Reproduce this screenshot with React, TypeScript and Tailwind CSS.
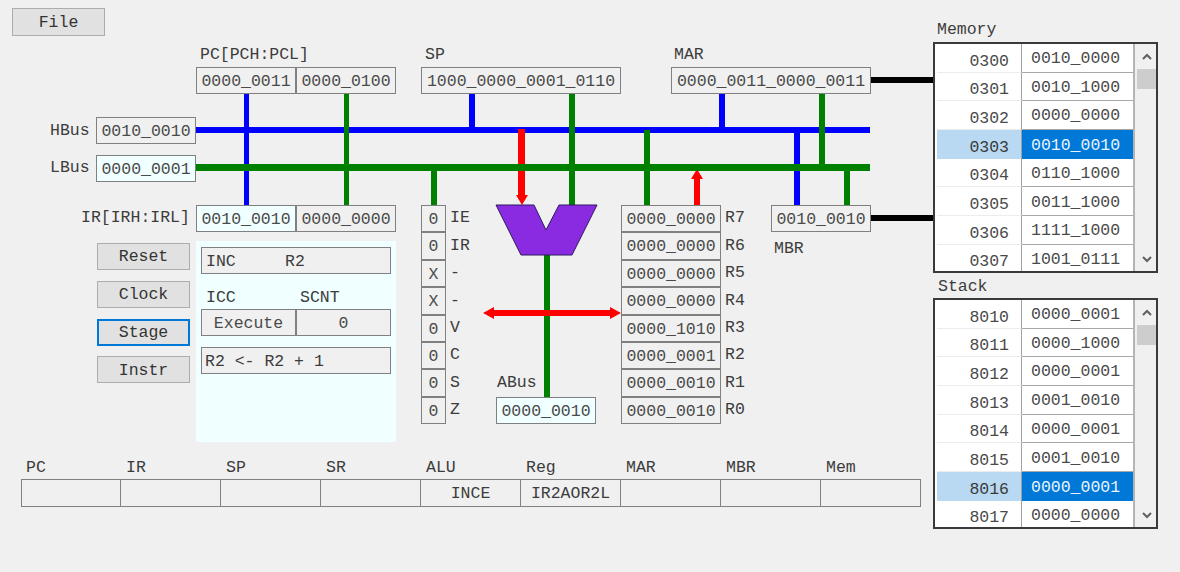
const box = "flex shrink-0 items-center justify-center border border-[#808080] pt-[3px] text-[#4a4a4a]";
const cell = `${box} h-[27px] w-[100px]`;
const wide = `${box} h-[27px] w-[200px]`;
const tint = `${cell} bg-[#f0ffff]`;
const text = "text-[#3c3c3c]";
const btn = "flex h-[27px] w-[93px] items-center justify-center border border-[#adadad] bg-[#e1e1e1] pt-[2px] text-[#333]";

function Wires() {
  return (
    <svg className="absolute left-0 top-0" width="933" height="460" viewBox="0 0 933 460">
      <g fill="#0000ff">
        <rect x="196" y="127" width="674" height="6" />
        <rect x="244" y="94" width="5" height="111" />
        <rect x="469" y="94" width="6" height="33" />
        <rect x="719" y="94" width="6" height="33" />
        <rect x="794" y="133" width="6" height="72" />
      </g>
      <g fill="#ff0000">
        <rect x="518" y="129" width="7" height="68" />
        <path d="M516 195 L528 195 L522 205 Z" />
        <rect x="694" y="178" width="6" height="27" />
        <path d="M697 169 L703 179 L691 179 Z" />
      </g>
      <g fill="#008000">
        <rect x="196" y="164" width="674" height="7" />
        <rect x="344" y="94" width="5" height="111" />
        <rect x="431" y="170" width="6" height="35" />
        <rect x="569" y="94" width="6" height="111" />
        <rect x="644" y="130" width="6" height="75" />
        <rect x="819" y="94" width="6" height="70" />
        <rect x="844" y="170" width="6" height="35" />
        <rect x="544" y="255" width="6" height="142" />
      </g>
      <g fill="#000000">
        <rect x="870" y="77" width="63" height="6" />
        <rect x="870" y="215" width="63" height="6" />
      </g>
      <path d="M496 205 L534 205 L546 230 L559 205 L597 205 L572 255 L521 255 Z" fill="#8a2be2" stroke="#2a1a60" strokeWidth="1" />
      <path d="M483 313 L494 307 L494 310 L610 310 L610 307 L621 313 L610 319 L610 316 L494 316 L494 319 Z" fill="#ff0000" />
    </svg>
  );
}

function Chevron({ up }: { up?: boolean }) {
  return (
    <svg width="10" height="7" viewBox="0 0 10 7">
      <path d={up ? "M1 6 L5 2 L9 6" : "M1 1 L5 5 L9 1"} fill="none" stroke="#606060" strokeWidth="2" />
    </svg>
  );
}

function ListPanel({ rows, selected }: { rows: [string, string][]; selected: number }) {
  return (
    <div className="flex h-[231px] w-[225px] overflow-hidden border-2 border-[#3a3a3a] bg-white pl-[2px]">
      <div className="flex w-[196px] flex-col overflow-hidden">
        {rows.map(([addr, value], i) => (
          <div key={addr} className="flex h-[28.7px] shrink-0">
            <div
              className={
                i === selected
                  ? "flex w-[85px] items-center justify-end border-r border-[#a0a0a0] bg-[#b9d9f2] pr-[12px] pt-[8px] text-[#3a3a3a]"
                  : "flex w-[85px] items-center justify-end border-r border-b border-r-[#a0a0a0] border-b-[#ececec] pr-[12px] pt-[8px] text-[#4a4a4a]"
              }
            >
              {addr}
            </div>
            <div
              className={
                i === selected
                  ? "flex flex-1 items-center bg-[#0078d7] pl-[9px] pt-[3px] text-[#e8f4ff]"
                  : "flex flex-1 items-center border-b border-[#a8a8a8] pl-[9px] pt-[3px] text-[#4a4a4a]"
              }
            >
              {value}
            </div>
          </div>
        ))}
      </div>
      <div className="flex w-[23px] flex-col items-center border-l-2 border-[#b4b4b4] bg-[#f0f0f0] pl-[2px]">
        <div className="flex h-[25px] items-center justify-center">
          <Chevron up />
        </div>
        <div className="h-[20px] w-full bg-[#cdcdcd]" />
        <div className="flex-1" />
        <div className="flex h-[24px] items-center justify-center">
          <Chevron />
        </div>
      </div>
    </div>
  );
}

const memory: [string, string][] = [
  ["0300", "0010_0000"], ["0301", "0010_1000"], ["0302", "0000_0000"], ["0303", "0010_0010"],
  ["0304", "0110_1000"], ["0305", "0011_1000"], ["0306", "1111_1000"], ["0307", "1001_0111"],
];
const stack: [string, string][] = [
  ["8010", "0000_0001"], ["8011", "0000_1000"], ["8012", "0000_0001"], ["8013", "0001_0010"],
  ["8014", "0000_0001"], ["8015", "0001_0010"], ["8016", "0000_0001"], ["8017", "0000_0000"],
];
const flags: [string, string][] = [
  ["0", "IE"], ["0", "IR"], ["X", "-"], ["X", "-"], ["0", "V"], ["0", "C"], ["0", "S"], ["0", "Z"],
];
const registers: [string, string][] = [
  ["0000_0000", "R7"], ["0000_0000", "R6"], ["0000_0000", "R5"], ["0000_0000", "R4"],
  ["0000_1010", "R3"], ["0000_0001", "R2"], ["0000_0010", "R1"], ["0000_0010", "R0"],
];
const trace: [string, string][] = [
  ["PC", ""], ["IR", ""], ["SP", ""], ["SR", ""], ["ALU", "INCE"], ["Reg", "IR2AOR2L"], ["MAR", ""], ["MBR", ""], ["Mem", ""],
];

export default function App() {
  return (
    <div className="flex h-[572px] w-[1180px] overflow-hidden bg-[#f0f0f0] font-['Liberation_Mono',monospace] text-[16.5px] leading-none">
      <div className="w-[933px] shrink-0">
        <div className="relative h-[460px]">
          <Wires />

          <div className={`${btn} absolute left-[12px] top-[8px] h-[28px]`}>File</div>

          <div className="absolute left-[196px] top-[47px] flex w-[200px] flex-col">
            <div className={`h-[20px] pl-[4px] ${text}`}>PC[PCH:PCL]</div>
            <div className="flex">
              <div className={cell}>0000_0011</div>
              <div className={cell}>0000_0100</div>
            </div>
          </div>
          <div className="absolute left-[421px] top-[47px] flex flex-col">
            <div className={`h-[20px] pl-[4px] ${text}`}>SP</div>
            <div className={wide}>1000_0000_0001_0110</div>
          </div>
          <div className="absolute left-[671px] top-[47px] flex flex-col">
            <div className={`h-[20px] pl-[3px] ${text}`}>MAR</div>
            <div className={wide}>0000_0011_0000_0011</div>
          </div>

          <div className="absolute left-[50px] top-[117px] flex flex-col gap-[11px]">
            <div className="flex items-center">
              <div className={`w-[46px] pt-[2px] ${text}`}>HBus</div>
              <div className={cell}>0010_0010</div>
            </div>
            <div className="flex items-center">
              <div className={`w-[46px] ${text}`}>LBus</div>
              <div className={tint}>0000_0001</div>
            </div>
          </div>

          <div className="absolute left-[81px] top-[205px] flex items-center">
            <div className={`w-[115px] ${text}`}>IR[IRH:IRL]</div>
            <div className={tint}>0010_0010</div>
            <div className={cell}>0000_0000</div>
          </div>

          <div className="absolute left-[97px] top-[243px] flex flex-col gap-[10.8px]">
            <div className={btn}>Reset</div>
            <div className={btn}>Clock</div>
            <div className="flex h-[27px] w-[93px] items-center justify-center border-2 border-[#0078d7] bg-[#e1e1e1] pt-[2px] text-[#333]">Stage</div>
            <div className={btn}>Instr</div>
          </div>

          <div className={`absolute left-[196px] top-[241px] flex h-[201px] w-[200px] flex-col bg-[#f0ffff] px-[5px] pt-[6px] ${text}`}>
            <div className="flex h-[27px] items-center border border-[#808080] bg-[#f0f0f0] pl-[4px] pt-[3px]">
              <span className="w-[79px]">INC</span>
              <span>R2</span>
            </div>
            <div className="flex h-[35px] items-end pb-[3px] pl-[5px]">
              <span className="w-[94px]">ICC</span>
              <span>SCNT</span>
            </div>
            <div className="flex">
              <div className={`${box} h-[27px] w-[95px] bg-[#f0f0f0] text-[#3c3c3c]`}>Execute</div>
              <div className={`${box} h-[27px] w-[95px] bg-[#f0f0f0]`}>0</div>
            </div>
            <div className="mt-[11px] flex h-[27px] items-center border border-[#808080] bg-[#f0f0f0] pl-[3px] pt-[3px]">R2 &lt;- R2 + 1</div>
          </div>

          <div className="absolute left-[421px] top-[205px] flex flex-col">
            {flags.map(([value, name], i) => (
              <div key={i} className="flex h-[27.4px] items-center">
                <div className={`${box} h-full w-[25px]`}>{value}</div>
                <div className={`pl-[4px] ${text}`}>{name}</div>
              </div>
            ))}
          </div>

          <div className="absolute left-[496px] top-[375px] flex flex-col">
            <div className={`h-[22px] pl-[1px] ${text}`}>ABus</div>
            <div className={tint}>0000_0010</div>
          </div>

          <div className="absolute left-[621px] top-[205px] flex flex-col">
            {registers.map(([value, name]) => (
              <div key={name} className="flex h-[27.4px] items-center">
                <div className={`${box} h-full w-[100px]`}>{value}</div>
                <div className={`pl-[4px] ${text}`}>{name}</div>
              </div>
            ))}
          </div>

          <div className="absolute left-[771px] top-[205px] flex flex-col">
            <div className={cell}>0010_0010</div>
            <div className={`mt-[9px] pl-[3px] ${text}`}>MBR</div>
          </div>
        </div>

        <div className="ml-[21px] grid w-[900px] grid-cols-9">
          {trace.map(([name]) => (
            <div key={name} className={`h-[19px] pl-[5px] ${text}`}>{name}</div>
          ))}
          {trace.map(([name, value], i) => (
            <div
              key={name}
              className={
                i === 0
                  ? "flex h-[28px] items-center justify-center border border-[#808080] pt-[2px] text-[#3c3c3c]"
                  : "flex h-[28px] items-center justify-center border border-l-0 border-[#808080] pt-[2px] text-[#3c3c3c]"
              }
            >
              {value}
            </div>
          ))}
        </div>
      </div>

      <div className="w-[225px] shrink-0 pt-[22px]">
        <div className={`h-[20px] pl-[4px] ${text}`}>Memory</div>
        <ListPanel rows={memory} selected={3} />
        <div className={`h-[25px] pl-[5px] pt-[6px] ${text}`}>Stack</div>
        <ListPanel rows={stack} selected={6} />
      </div>
    </div>
  );
}
